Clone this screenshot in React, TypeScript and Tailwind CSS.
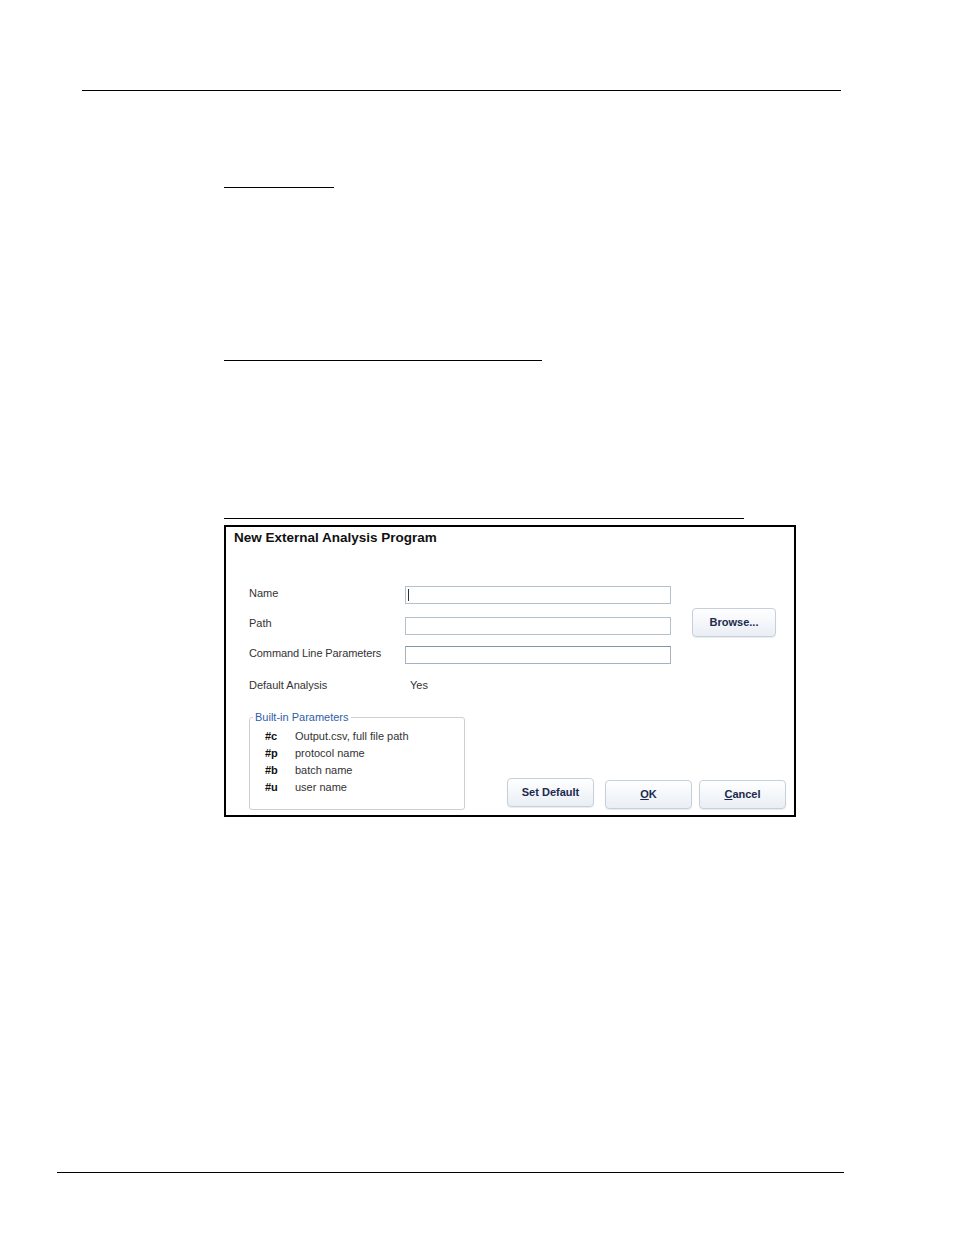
import React from "react";

const font = { fontFamily: '"Liberation Sans", Arial, sans-serif' };

const DialogButton: React.FC<{ children: React.ReactNode; className?: string }> = ({ children, className = "" }) => (
  <button
    className={`h-[29px] w-[87px] rounded-[4px] border border-[#c6d0dc] bg-gradient-to-b from-white to-[#e9eef5] text-[11px] font-bold text-[#1b2a4e] shadow-[0_1px_1px_rgba(0,0,0,0.08)] ${className}`}
  >
    {children}
  </button>
);

const TextBox: React.FC<{ caret?: boolean; dark?: boolean }> = ({ caret, dark }) => (
  <div
    className={`flex h-[18px] w-[266px] items-center border bg-white pl-[2px] ${
      dark ? "border-[#a4b2c2] border-t-[#8494a6]" : "border-[#b3c1cf]"
    }`}
  >
    {caret && <span className="h-[12px] w-px bg-[#333]" />}
  </div>
);

const params = [
  { code: "#c", text: "Output.csv, full file path" },
  { code: "#p", text: "protocol name" },
  { code: "#b", text: "batch name" },
  { code: "#u", text: "user name" },
];

export default function App() {
  return (
    <div className="flex h-[1235px] w-[954px] flex-col bg-white" style={font}>
      {/* page header rule */}
      <div className="ml-[82px] mt-[90px] h-px w-[759px] bg-black" />

      {/* section headings (text not visible) */}
      <div className="ml-[224px] mt-[96px] h-px w-[110px] bg-black" />
      <div className="ml-[224px] mt-[172px] h-px w-[318px] bg-black" />
      <div className="ml-[224px] mt-[157px] h-px w-[520px] bg-black" />

      {/* dialog */}
      <div className="ml-[224px] mt-[6px] flex h-[292px] w-[572px] flex-col border-2 border-black bg-white">
        <div className="pl-[8px] pt-[3px] text-[13.5px] font-bold leading-[16px] text-[#111]">
          New External Analysis Program
        </div>

        <div className="flex flex-col pl-[23px] text-[11px] text-[#333]">
          <div className="mt-[40px] flex h-[18px] items-center">
            <span className="-mt-[4px] w-[156px]">Name</span>
            <TextBox caret />
          </div>

          <div className="mt-[13px] flex h-[18px] items-center">
            <span className="-mt-[5px] w-[156px]">Path</span>
            <TextBox />
            <div className="ml-[21px] h-[18px] self-start">
              <button className="-mt-[9px] block h-[29px] w-[84px] rounded-[4px] border border-[#c6d0dc] bg-gradient-to-b from-white to-[#e9eef5] text-[11px] font-bold text-[#1b2a4e] shadow-[0_1px_1px_rgba(0,0,0,0.08)]">
                Browse...
              </button>
            </div>
          </div>

          <div className="mt-[11px] flex h-[18px] items-center">
            <span className="-mt-[4px] w-[156px] tracking-[-0.1px]">Command Line Parameters</span>
            <TextBox dark />
          </div>

          <div className="mt-[14px] flex leading-[14px]">
            <span className="w-[161px]">Default Analysis</span>
            <span>Yes</span>
          </div>

          <div className="mt-[18px] flex items-end">
            <fieldset className="h-[100px] w-[216px] rounded-[3px] border border-[#cfcfcf] px-[3px] pb-0">
              <legend className="px-[2px] text-[11px] leading-[14px] text-[#2f5ea8]">Built-in Parameters</legend>
              <div className="pl-[12px] pt-[4px] leading-[17px]">
                {params.map((p) => (
                  <div key={p.code} className="flex">
                    <span className="w-[30px] font-bold text-[#111]">{p.code}</span>
                    <span>{p.text}</span>
                  </div>
                ))}
              </div>
            </fieldset>

            <div className="ml-[42px] flex items-end">
              <DialogButton className="mb-[3px]">Set Default</DialogButton>
              <DialogButton className="mb-[1px] ml-[11px]">
                <span className="underline">O</span>K
              </DialogButton>
              <DialogButton className="mb-[1px] ml-[7px]">
                <span className="underline">C</span>ancel
              </DialogButton>
            </div>
          </div>
        </div>
      </div>

      {/* page footer rule */}
      <div className="ml-[57px] mt-[355px] h-px w-[787px] bg-black" />
    </div>
  );
}
